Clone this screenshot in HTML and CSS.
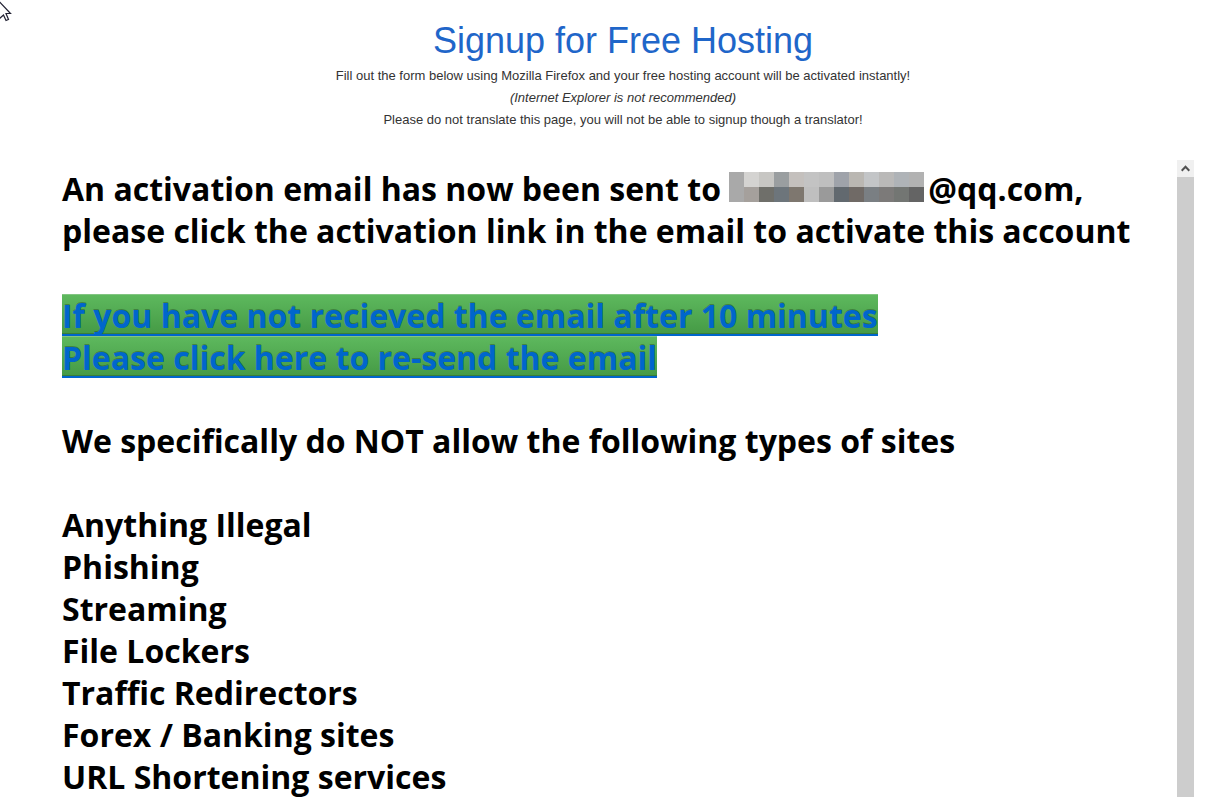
FILE: index.html
```html
<!DOCTYPE html>
<html lang="en">
<head>
<meta charset="utf-8">
<title>Signup for Free Hosting</title>
<link rel="stylesheet" href="styles.css">
</head>
<body>
<svg class="cursor" width="12" height="22" viewBox="0 0 12 22" aria-hidden="true"><path d="M-5 -3L10.500 13.500H6L8.500 19.500L6 20.500L3.500 15L-1 19" fill="#fff" stroke="#223" stroke-width="1.200"/></svg>
<div class="page">
  <header class="intro">
    <h1 class="title">Signup for Free Hosting</h1>
    <p class="note">Fill out the form below using Mozilla Firefox and your free hosting account will be activated instantly!</p>
    <p class="note"><em>(Internet Explorer is not recommended)</em></p>
    <p class="note">Please do not translate this page, you will not be able to signup though a translator!</p>
  </header>
  <main class="panel">
    <div class="message">
      <p class="block">An activation email has now been sent to <svg class="mosaic" width="195" height="30" viewBox="0 0 13 2" shape-rendering="crispEdges" role="img" aria-label="Hidden address"><path fill="#a9a9a9" d="M0 0h1v2H0z"/><path fill="#d4d3d1" d="M1 0h1v1H1z"/><path fill="#c7c6c3" d="M2 0h1v1H2z"/><path fill="#9a9ea0" d="M3 0h1v1H3z"/><path fill="#c4c0bd" d="M4 0h1v1H4z"/><path fill="#c3c3c3" d="M5 0h1v1H5z"/><path fill="#bfbfbf" d="M6 0h1v1H6z"/><path fill="#9fa3aa" d="M7 0h1v1H7z"/><path fill="#bab7b2" d="M8 0h1v1H8z"/><path fill="#c3c5c7" d="M9 0h1v1H9z"/><path fill="#bab9b8" d="M10 0h1v1h-1z"/><path fill="#afb3b7" d="M11 0h1v1h-1z"/><path fill="#b2b2b2" d="M12 0h1v1h-1z"/><path fill="#a5a09c" d="M1 1h1v1H1z"/><path fill="#6f6f6a" d="M2 1h1v1H2z"/><path fill="#6d757b" d="M3 1h1v1H3z"/><path fill="#7e776f" d="M4 1h1v1H4z"/><path fill="#bfbfbf" d="M5 1h1v1H5z"/><path fill="#9a9a9a" d="M6 1h1v1H6z"/><path fill="#62696f" d="M7 1h1v1H7z"/><path fill="#706a66" d="M8 1h1v1H8z"/><path fill="#7a7f83" d="M9 1h1v1H9z"/><path fill="#7c7a79" d="M10 1h1v1h-1z"/><path fill="#737673" d="M11 1h1v1h-1z"/><path fill="#646464" d="M12 1h1v1h-1z"/></svg>@qq.com,<br>please click the activation link in the email to activate this account</p>
      <a class="resend" href="#resend"><span class="resend-line">If you have not recieved the email after 10 minutes</span><span class="resend-line">Please click here to re-send the email</span></a>
      <p class="block">We specifically do NOT allow the following types of sites</p>
      <ul class="list">
        <li>Anything Illegal</li>
        <li>Phishing</li>
        <li>Streaming</li>
        <li>File Lockers</li>
        <li>Traffic Redirectors</li>
        <li>Forex / Banking sites</li>
        <li>URL Shortening services</li>
      </ul>
    </div>
    <div class="scrollbar">
      <button class="scroll-up" type="button" aria-label="Scroll up"><svg width="9" height="7" viewBox="0 0 9 7" aria-hidden="true"><path d="M.7 5.700L4.500 1.700L8.300 5.700" fill="none" stroke="#505050" stroke-width="2"/></svg></button>
      <div class="thumb"></div>
    </div>
  </main>
</div>
</body>
</html>
```
FILE: styles.css
```css
* { box-sizing: border-box; }
body { margin: 0; background: #fff; color: #333; font-family: "Liberation Sans", Arial, sans-serif; }
h1, p, ul { margin: 0; padding: 0; }
.cursor { position: absolute; left: 0; top: 0; }
.page { display: flex; flex-direction: column; height: 100vh; overflow: hidden; padding: 21px 26px 0 52px; }
.intro { text-align: center; padding-bottom: 29px; }
.title { font-size: 36px; line-height: 40px; font-weight: 400; color: #1f66c9; margin-bottom: 4px; }
.note { font-size: 13px; line-height: 22px; }
.panel { display: flex; flex: 1; min-height: 0; }
.message { flex: 1; overflow: hidden; padding: 8px 10px 0; color: #000; font: bold 32px/42px "Open Sans", "Noto Sans", sans-serif; white-space: nowrap; }
.block { margin-bottom: 42px; }
.mosaic { vertical-align: -1px; margin-right: 4px; }
.resend { display: flex; flex-direction: column; align-items: flex-start; margin-bottom: 42px; color: #06c; text-decoration: none; text-shadow: 0 -1px 0 rgba(0, 0, 0, .25); }
.resend-line { height: 42px; line-height: 43px; background: linear-gradient(#5eb95e, #459a45); border-bottom: 2px solid #06c; box-shadow: inset 0 1px 0 #82c582, inset 0 -1px 0 #397e39; }
.list { list-style: none; }
.scrollbar { display: flex; flex-direction: column; width: 17px; background: #f0f0f0; }
.scroll-up { display: flex; align-items: center; justify-content: center; height: 17px; padding: 0; border: 0; background: #f0f0f0; }
.thumb { flex: 1; background: #cdcdcd; }
```
